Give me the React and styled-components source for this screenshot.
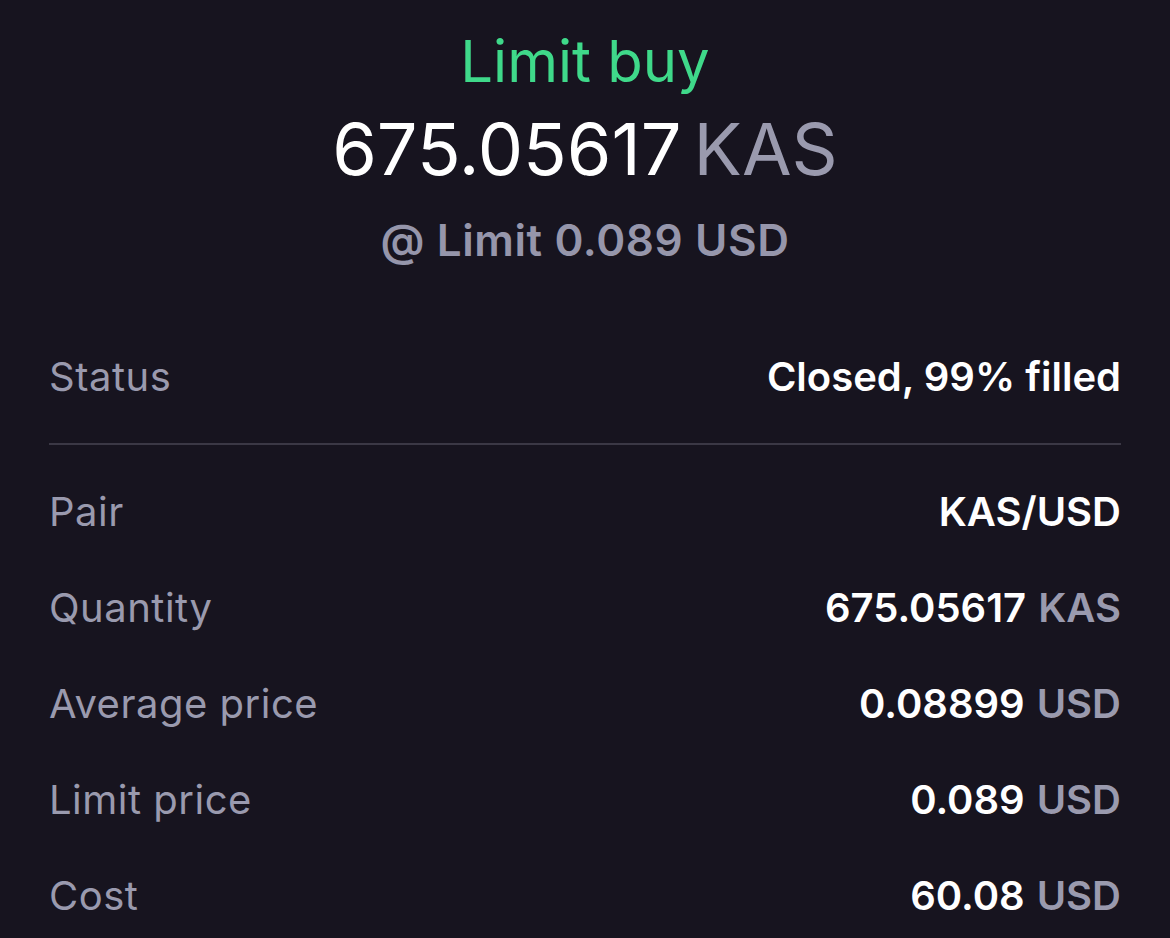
import React from 'react'
import styled, { createGlobalStyle } from 'styled-components'

const GlobalStyle = createGlobalStyle`
  html, body {
    margin: 0;
    padding: 0;
    background: #17141f;
  }
  body {
    font-family: Inter, "Noto Sans", "Liberation Sans", sans-serif;
    -webkit-font-smoothing: antialiased;
  }
`

const Screen = styled.div`
  width: 1170px;
  height: 938px;
  overflow: hidden;
  background: #17141f;
  box-sizing: border-box;
  padding: 26px 49px 0;
`

const Header = styled.header`
  display: flex;
  flex-direction: column;
  align-items: center;
`

const Title = styled.h1`
  margin: 0;
  font-size: 58px;
  line-height: 70px;
  font-weight: 400;
  color: #3fd98a;
`

const Amount = styled.div`
  margin-top: 10px;
  font-size: 72px;
  line-height: 86px;
  font-weight: 400;
  color: #ffffff;
  display: flex;
  gap: 12px;
`

const Unit = styled.span`
  color: #9a9aae;
  font-weight: ${p => (p.bold ? 600 : 400)};
`

const SubLine = styled.div`
  margin-top: 21px;
  font-size: 44px;
  line-height: 54px;
  font-weight: 600;
  letter-spacing: 0.6px;
  color: #9696ab;
`

const Details = styled.section`
  margin-top: 61px;
  display: flex;
  flex-direction: column;
`

const Row = styled.div`
  height: 96px;
  display: flex;
  align-items: center;
  justify-content: space-between;
`

const Divider = styled.hr`
  margin: 19px 0 18px;
  border: none;
  height: 2px;
  background: #3b3845;
`

const Label = styled.span`
  font-size: 40px;
  font-weight: 400;
  letter-spacing: 0.5px;
  color: #9a9aae;
`

const Value = styled.span`
  font-size: 40px;
  font-weight: 600;
  color: #ffffff;
  display: flex;
  gap: 12px;
`

const rows = [
  { label: 'Pair', value: 'KAS/USD' },
  { label: 'Quantity', value: '675.05617', unit: 'KAS' },
  { label: 'Average price', value: '0.08899', unit: 'USD' },
  { label: 'Limit price', value: '0.089', unit: 'USD' },
  { label: 'Cost', value: '60.08', unit: 'USD' }
]

export default function App () {
  return (
    <Screen>
      <GlobalStyle />
      <Header>
        <Title>Limit buy</Title>
        <Amount>
          <span>675.05617</span>
          <Unit>KAS</Unit>
        </Amount>
        <SubLine>@ Limit 0.089 USD</SubLine>
      </Header>
      <Details>
        <Row>
          <Label>Status</Label>
          <Value>Closed, 99% filled</Value>
        </Row>
        <Divider />
        {rows.map(row => (
          <Row key={row.label}>
            <Label>{row.label}</Label>
            <Value>
              <span>{row.value}</span>
              {row.unit && <Unit bold>{row.unit}</Unit>}
            </Value>
          </Row>
        ))}
      </Details>
    </Screen>
  )
}
